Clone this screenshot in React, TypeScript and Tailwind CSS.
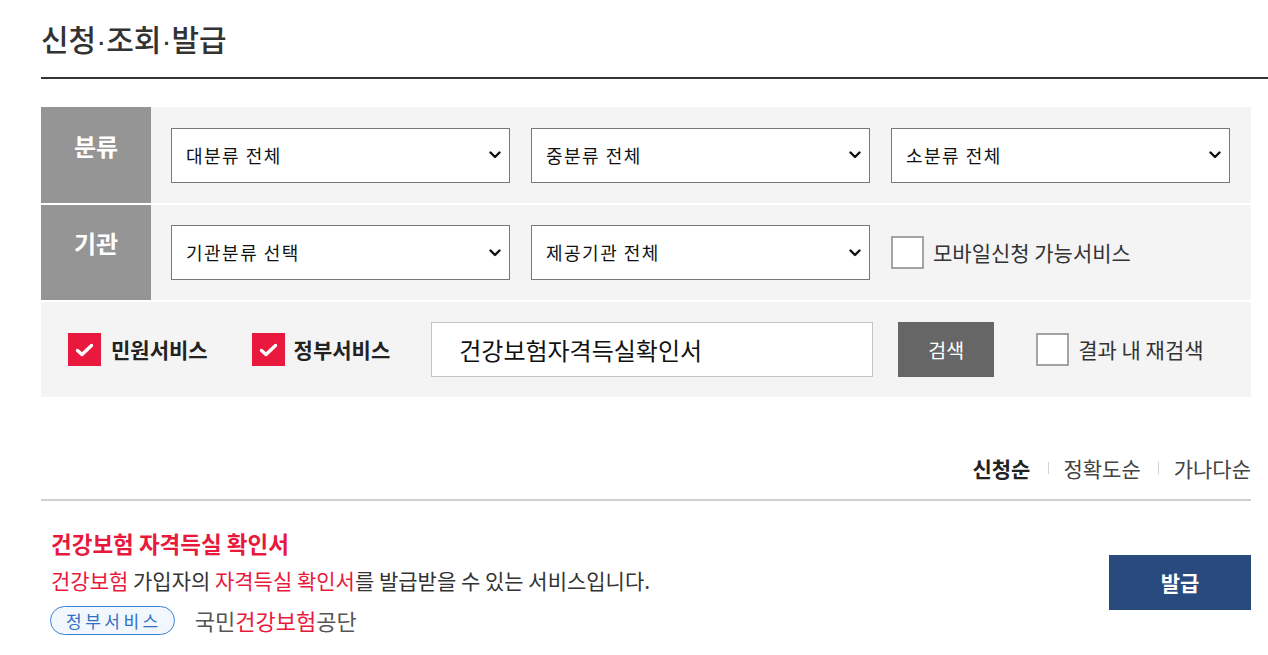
import React from 'react';

const Chevron = () => (
  <svg width="12" height="8" viewBox="0 0 12 8" className="shrink-0">
    <path d="M1.5 1.5 L6 6 L10.5 1.5" fill="none" stroke="#111" strokeWidth="2.4" strokeLinecap="round" strokeLinejoin="round" />
  </svg>
);

function Select({ label }: { label: string }) {
  return (
    <div className="flex items-center justify-between w-[339px] h-[55px] bg-white border border-[#77777f] pl-[14px] pr-[8px]">
      <span className="text-[18px] tracking-[1.5px] text-[#111]">{label}</span>
      <Chevron />
    </div>
  );
}

function GrayBox() {
  return <span className="w-[33px] h-[33px] bg-white border-2 border-[#a3a3a3] shrink-0" />;
}

function RedBox() {
  return (
    <span className="w-[33px] h-[33px] bg-[#e8193c] flex items-center justify-center shrink-0">
      <svg width="19" height="14" viewBox="0 0 19 14">
        <path d="M2.5 7.5 L7 11.5 L16.5 2.5" fill="none" stroke="#fff" strokeWidth="3.4" strokeLinecap="round" strokeLinejoin="round" />
      </svg>
    </span>
  );
}

const Dot = () => <span className="font-['Liberation_Sans',sans-serif]">·</span>;

export default function App() {
  return (
    <div className="w-[1268px] h-[655px] overflow-hidden bg-white font-['Noto_Sans_CJK_KR','Noto_Sans',sans-serif] text-[#333]">
      <div className="pl-[41px]">
        {/* Title */}
        <h2 className="h-[79px] text-[30px] font-medium leading-none text-[#333] pt-[23px] border-b-2 border-[#333]">
          신청<Dot />조회<Dot />발급
        </h2>

        {/* Filter box */}
        <div className="mt-[28px] w-[1210px] flex flex-col gap-[2px] bg-white">
          <div className="flex h-[96px] bg-[#f4f4f4]">
            <div className="w-[110px] bg-[#959595] flex justify-center pt-[23px]">
              <span className="text-[24px] font-bold text-white leading-[32px]">분류</span>
            </div>
            <div className="flex items-center gap-[21px] pl-[20px]">
              <Select label="대분류 전체" />
              <Select label="중분류 전체" />
              <Select label="소분류 전체" />
            </div>
          </div>

          <div className="flex h-[95px] bg-[#f4f4f4]">
            <div className="w-[110px] bg-[#959595] flex justify-center pt-[22px]">
              <span className="text-[24px] font-bold text-white leading-[32px]">기관</span>
            </div>
            <div className="flex items-center gap-[21px] pl-[20px]">
              <Select label="기관분류 선택" />
              <Select label="제공기관 전체" />
              <div className="flex items-center gap-[9px]">
                <GrayBox />
                <span className="text-[21px] text-[#333]">모바일신청 가능서비스</span>
              </div>
            </div>
          </div>

          <div className="flex items-center h-[95px] bg-[#f4f4f4] pl-[27px]">
            <div className="flex items-center gap-[10px]">
              <RedBox />
              <span className="text-[21px] font-bold text-[#222]">민원서비스</span>
            </div>
            <div className="flex items-center gap-[9px] ml-[44px]">
              <RedBox />
              <span className="text-[21px] font-bold text-[#222]">정부서비스</span>
            </div>
            <div className="ml-[41px] w-[442px] h-[55px] bg-white border border-[#c4c4c4] flex items-center pl-[27px]">
              <span className="text-[24px] text-[#111]">건강보험자격득실확인서</span>
            </div>
            <button className="ml-[25px] w-[96px] h-[55px] bg-[#666] text-white text-[19.5px] flex items-center justify-center">
              검색
            </button>
            <div className="flex items-center gap-[9px] ml-[42px]">
              <GrayBox />
              <span className="text-[21px] text-[#333]">결과 내 재검색</span>
            </div>
          </div>
        </div>

        {/* Sort */}
        <div className="w-[1210px] flex justify-end items-center mt-[56px] pb-[16px] border-b-2 border-[#cfcfcf] text-[21px] leading-[30px]">
          <span className="font-bold text-[#222]">신청순</span>
          <span className="w-px h-[12px] bg-[#d4d4d4] ml-[18px] mr-[14px]" />
          <span className="text-[#444]">정확도순</span>
          <span className="w-px h-[12px] bg-[#d4d4d4] ml-[17px] mr-[15px]" />
          <span className="text-[#444]">가나다순</span>
        </div>

        {/* Result */}
        <div className="w-[1210px] flex justify-between items-start pt-[26px]">
          <div className="pl-[10px] flex flex-col">
            <span className="text-[22.5px] font-bold text-[#e8193c] leading-[32px]">건강보험 자격득실 확인서</span>
            <p className="text-[21px] text-[#333] leading-[30px] mt-[6px]">
              <span className="text-[#e8193c]">건강보험</span> 가입자의{' '}
              <span className="text-[#e8193c]">자격득실 확인서</span>를 발급받을 수 있는 서비스입니다.
            </p>
            <div className="flex items-center mt-[9px]">
              <span className="-ml-[1px] h-[29px] pl-[15px] pr-[12px] rounded-full border border-[#3b82d6] bg-[#f2f7fd] text-[#2f6fc4] text-[17px] tracking-[3.5px] flex items-center">
                정부서비스
              </span>
              <span className="ml-[20px] text-[22px] text-[#555]">
                국민<span className="text-[#e8193c]">건강보험</span>공단
              </span>
            </div>
          </div>
          <button className="mt-[28px] w-[142px] h-[55px] bg-[#284a7e] text-white text-[21px] font-bold flex items-center justify-center">
            발급
          </button>
        </div>
      </div>
    </div>
  );
}
